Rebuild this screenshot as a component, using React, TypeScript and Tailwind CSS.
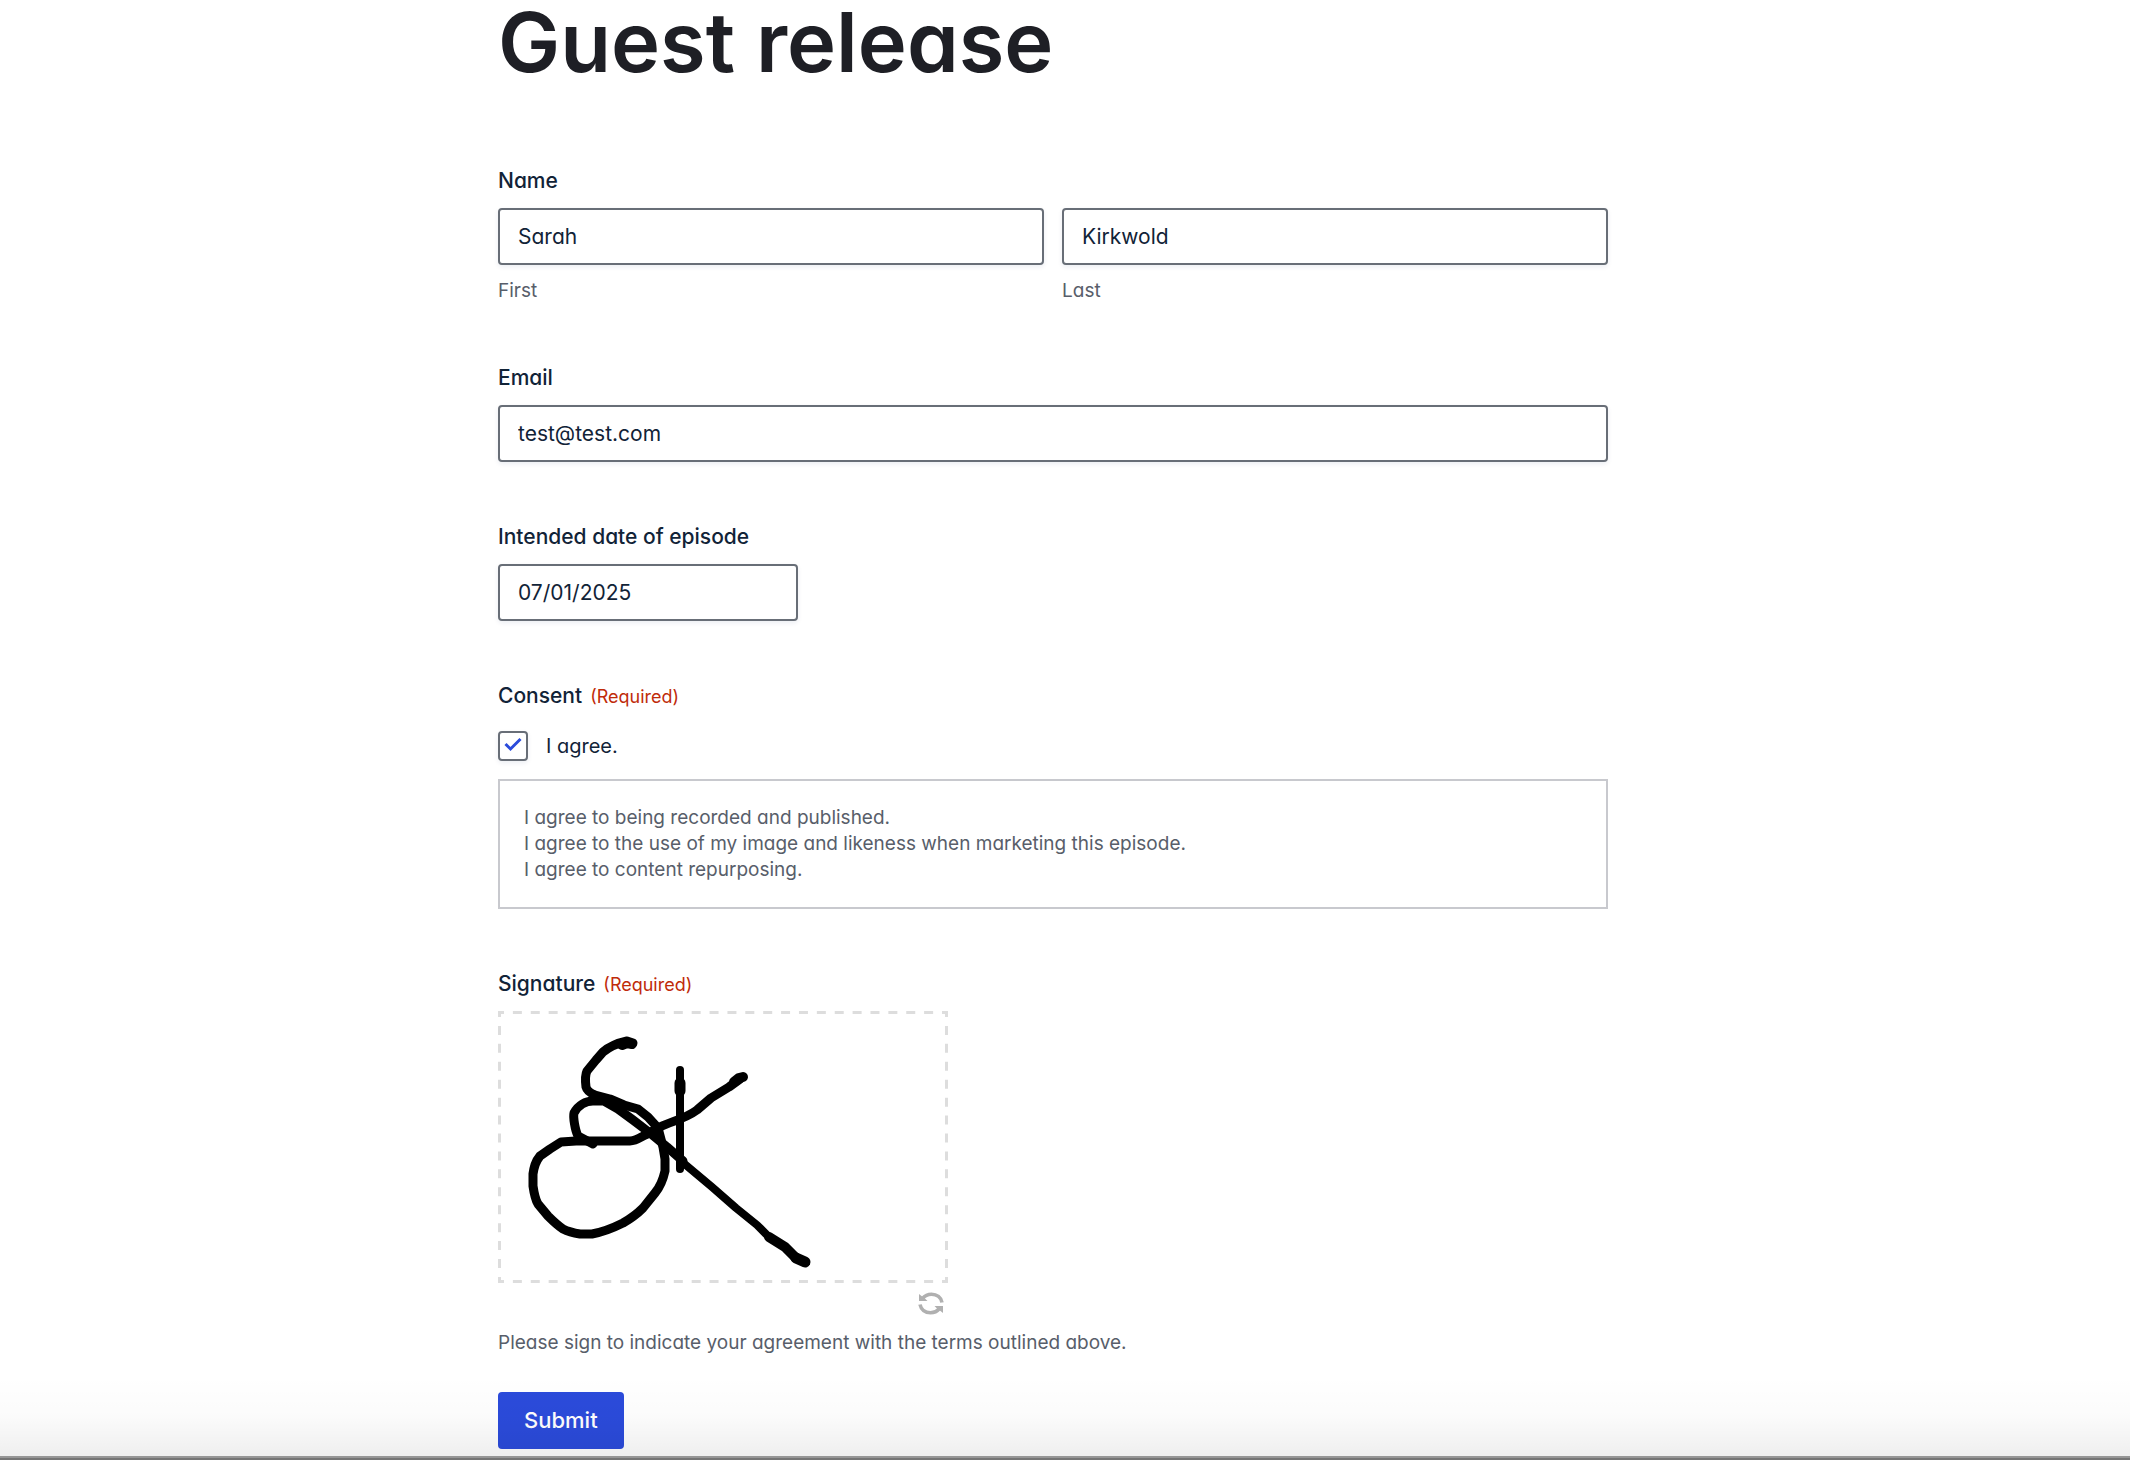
import type { ReactNode } from 'react';

const INPUT_CLASS =
  'block h-[57px] w-full rounded-[4px] border-2 border-[#686e77] bg-white px-[18px] text-[21px] text-[#112337] shadow-[0_2px_5px_rgba(19,40,96,0.08)] outline-none';

const LABEL_CLASS = 'text-[21px] leading-[28px] font-medium text-[#112337]';

const HINT_CLASS = 'text-[19px] leading-[26px] text-[#585e6a]';

function Required() {
  return <span className="ml-2 text-[18px] leading-none font-normal text-[#c02b0a]">(Required)</span>;
}

interface FieldProps {
  id: string;
  label: string;
  children: ReactNode;
}

function Field({ id, label, children }: FieldProps) {
  return (
    <div>
      <label htmlFor={id} className={`${LABEL_CLASS} mb-[13px] block`}>
        {label}
      </label>
      {children}
    </div>
  );
}

/**
 * Dashed pad with the strokes drawn by the signer.
 */
function SignaturePad() {
  return (
    <svg
      viewBox="0 0 450 272"
      className="block h-[272px] w-[450px] max-w-full"
      role="img"
      aria-label="Signature"
    >
      <g stroke="#dddddd" strokeWidth="3" fill="none">
        <path d="M0 1.5H450M0 270.5H450" strokeDasharray="9 8.88" strokeDashoffset="3" />
        <path d="M1.5 0V272M448.5 0V272" strokeDasharray="9 8.93" strokeDashoffset="3" />
      </g>
      <g stroke="#000" strokeWidth="9" fill="none" strokeLinecap="round" strokeLinejoin="round">
        <path d="M135 32L129 30C120 32 111 36 105 41L98 49L89 60C87 64 87 68 88 76C89 80 92 82 97 84L112 88L126 94L140 98L150 106L160 117L165 136L167 148V160C165 169 162 176 157 182L145 197C138 204 132 208 125 212C115 217 105 221 94 223H82C76 222 71 221 65 218C59 214 55 210 50 205L40 193C37 188 36 182 35 175V163C36 156 37 151 42 145L52 138L63 131L78 130H132C138 130 143 126 149 123" />
        <path d="M95 133L80 125C77 119 75 106 76 102C80 94 88 90 95 90H106L120 98L135 109L152 122L169 136L185 150" />
        <path d="M97 86L112 90L122 95" strokeWidth="10" />
        <path d="M183 150L214 176L238 197L259 214L271 226" strokeWidth="8" />
        <path d="M271 226L287 236L298 247" strokeWidth="10" />
        <path d="M298 247L307 251" strokeWidth="11" />
        <path d="M182 59V158" strokeWidth="8" />
        <path d="M182 72V80" strokeWidth="11" />
        <path d="M149 123L162 116C174 110 187 108 199 99L213 87L231 76L242 68" />
        <path d="M124 34L129 32L134 33M236 71L241 67L245 66" strokeWidth="10" />
      </g>
    </svg>
  );
}

export default function App() {
  return (
    <div
      className="relative min-h-screen bg-white pr-6 text-[#112337]"
      style={{ fontFamily: 'Inter, "Liberation Sans", sans-serif', fontFeatureSettings: '"cv11"' }}
    >
      <main className="mx-auto max-w-[1110px]">
        <h1 className="text-[83px] leading-[84px] font-semibold text-[#1e1f25]">Guest release</h1>

        <form className="mt-[83px] pb-[11px]" onSubmit={(e) => e.preventDefault()}>
          <fieldset>
            <legend className={`${LABEL_CLASS} mb-[13px]`}>Name</legend>
            <div className="grid grid-cols-2 gap-[18px]">
              <div>
                <input id="first" defaultValue="Sarah" className={INPUT_CLASS} />
                <label htmlFor="first" className={`${HINT_CLASS} mt-[13px] block`}>
                  First
                </label>
              </div>
              <div>
                <input id="last" defaultValue="Kirkwold" className={INPUT_CLASS} />
                <label htmlFor="last" className={`${HINT_CLASS} mt-[13px] block`}>
                  Last
                </label>
              </div>
            </div>
          </fieldset>

          <div className="mt-[60px] flex flex-col gap-[61px]">
            <Field id="email" label="Email">
              <input id="email" type="email" defaultValue="test@test.com" className={INPUT_CLASS} />
            </Field>
            <Field id="date" label="Intended date of episode">
              <div className="w-[300px]">
                <input id="date" type="text" defaultValue="07/01/2025" className={INPUT_CLASS} />
              </div>
            </Field>

            <fieldset>
              <legend className={LABEL_CLASS}>
                Consent
                <Required />
              </legend>
              <div className="mt-[21px] flex items-center gap-[18px]">
                <span className="relative block size-[30px]">
                  <input
                    id="agree"
                    type="checkbox"
                    defaultChecked
                    className="peer block size-[30px] appearance-none rounded-[4px] border-2 border-[#686e77] bg-white shadow-[0_2px_5px_rgba(19,40,96,0.08)]"
                  />
                  <svg
                    viewBox="0 0 30 30"
                    className="pointer-events-none absolute inset-0 hidden size-[30px] peer-checked:block"
                    fill="none"
                    stroke="#2b4bdb"
                    strokeWidth="3"
                    aria-hidden="true"
                  >
                    <path d="M7.5 13L12.5 18L22.5 8" />
                  </svg>
                </span>
                <label htmlFor="agree" className="text-[20px] leading-[28px]">
                  I agree.
                </label>
              </div>
              <div className={`${HINT_CLASS} mt-[18px] border-2 border-[#c8c9ce] p-6`}>
                <p>I agree to being recorded and published.</p>
                <p>I agree to the use of my image and likeness when marketing this episode.</p>
                <p>I agree to content repurposing.</p>
              </div>
            </fieldset>

            <div>
              <p className={`${LABEL_CLASS} mb-[13px]`}>
                Signature
                <Required />
              </p>
              <SignaturePad />
              <div className="flex w-[450px] max-w-full justify-end pt-[9px] pr-1">
                <button type="reset" aria-label="Clear signature">
                  <svg viewBox="0 0 26 23" className="block h-[23px] w-[26px]" aria-hidden="true">
                    <g fill="none" stroke="#b0b0b0" strokeWidth="3.6">
                      <path d="M4.5 6.5C7 3.5 10 2.3 13.5 2.3C19 2.3 23 5.5 24 10.5" />
                      <path d="M21.5 16.5C19 19.5 16 20.7 12.5 20.7C7 20.7 3 17.5 2 12.5" />
                    </g>
                    <path d="M1 2V9H9.5L7 6.5L3.5 4ZM25 21V14H16.5L19 16.5L22.5 19Z" fill="#b0b0b0" />
                  </svg>
                </button>
              </div>
              <p className={`${HINT_CLASS} mt-[15px]`}>
                Please sign to indicate your agreement with the terms outlined above.
              </p>
            </div>
          </div>

          <button
            type="submit"
            className="mt-9 block h-[57px] rounded-[4px] bg-[#2b4bdb] px-[26px] text-[22px] font-medium text-white"
          >
            Submit
          </button>
        </form>
      </main>

      {/* shade and window edge along the bottom */}
      <div className="pointer-events-none absolute inset-x-0 bottom-0">
        <div className="h-[80px] bg-linear-to-b from-black/0 via-black/[0.015] to-black/[0.065]" />
        <div className="h-[2px] bg-[#969696]" />
        <div className="h-[2px] bg-[#757575]" />
      </div>
    </div>
  );
}
